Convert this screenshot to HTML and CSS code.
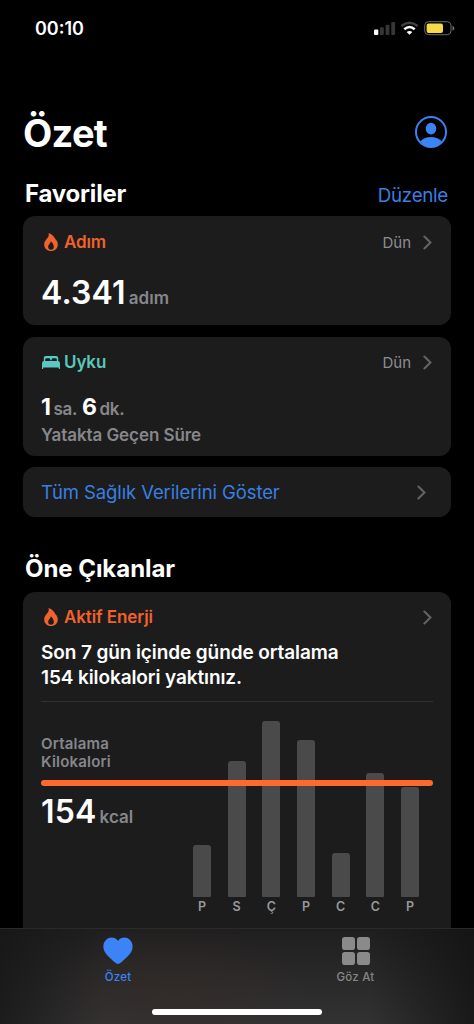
FILE: index.html
```html
<!DOCTYPE html>
<html lang="tr">
<head>
<meta charset="utf-8">
<title>Özet</title>
<link rel="stylesheet" href="styles.css">
</head>
<body>
<svg class="defs" width="0" height="0" aria-hidden="true">
  <symbol id="flame" viewBox="0 0 14 18"><path fill-rule="evenodd" d="M4.6 0C8 1.2 10.2 3.6 11.3 6C13 7.8 13.8 9.4 13.8 11.4C13.8 15.3 10.9 18 7 18C3.1 18 .2 15.2 .2 11.4C.2 9 1.2 7.6 2.6 6C4.4 4 5.2 2.4 4.6 0ZM6.7 8.2C6.9 10.4 4.2 11.2 4.2 14C4.2 15.7 5.3 16.8 7 16.8C8.7 16.8 9.8 15.7 9.8 14C9.8 11.6 8.4 9.4 6.7 8.2Z"/></symbol>
  <symbol id="chevron" viewBox="0 0 9 15"><path d="M1.4 1.5L7.4 7.5L1.4 13.5" fill="none" stroke="#626265" stroke-width="2.1" stroke-linecap="round" stroke-linejoin="miter"/></symbol>
</svg>
<div class="phone">
  <header class="status">
    <span class="clock">00:10</span>
    <svg class="status-icons" width="82" height="16" viewBox="0 0 82 16">
      <rect x="1" y="9.5" width="4.3" height="5.5" rx="1" fill="#fff"/>
      <rect x="7" y="7.2" width="3.8" height="7.8" rx="1" fill="#363636"/>
      <rect x="12.6" y="4.7" width="3.8" height="10.3" rx="1" fill="#363636"/>
      <rect x="18.3" y="2" width="3.8" height="13" rx="1" fill="#363636"/>
      <path d="M28.3 6Q36.5 -.6 44.7 6" fill="none" stroke="#414141" stroke-width="2.4"/>
      <path d="M31.3 9.2Q36.5 4.8 41.7 9.2" fill="none" stroke="#fff" stroke-width="2.6"/>
      <path d="M33.6 12Q36.5 9.8 39.4 12L36.5 14.8Z" fill="#fff"/>
      <rect x="51.7" y="1.7" width="26.3" height="13" rx="3.8" fill="none" stroke="#6b6b68" stroke-width="1"/>
      <rect x="53.6" y="3.4" width="16.4" height="9.6" rx="2" fill="#f4d94b"/>
      <path d="M79.5 5.8Q81.3 6.6 81.3 8.2T79.5 10.8Z" fill="#777"/>
    </svg>
  </header>
  <main class="content">
    <div class="title-row">
      <h1>Özet</h1>
      <svg width="32" height="32" viewBox="0 0 32 32" fill="#3b83f7">
        <circle cx="16" cy="16" r="15" fill="none" stroke="#3b83f7" stroke-width="2"/>
        <ellipse cx="16" cy="12.6" rx="5.3" ry="5.8"/>
        <path d="M5.2 25.3C8 22.4 12 21 16 21S24 22.4 26.8 25.3C24 29 20.2 31 16 31S8 29 5.2 25.3Z"/>
      </svg>
    </div>
    <div class="section-row"><h2>Favoriler</h2><a class="edit">Düzenle</a></div>

    <section class="card steps">
      <div class="card-head orange"><svg class="flame"><use href="#flame"/></svg><span class="name">Adım</span><span class="when">Dün</span><svg class="chev"><use href="#chevron"/></svg></div>
      <p class="big"><b>4.341</b><span>adım</span></p>
    </section>

    <section class="card sleep">
      <div class="card-head teal"><svg class="bed" viewBox="0 0 18 13"><path d="M1.8 5V1.9Q1.8 0 3.7 0H14.3Q16.2 0 16.2 1.9V5H14.8V3.6Q14.8 2.3 13.5 2.3H11Q9.7 2.3 9.7 3.6V4.2H8.3V3.6Q8.3 2.3 7 2.3H4.5Q3.2 2.3 3.2 3.6V5ZM0 7.4Q0 5.1 2 5.1H16Q18 5.1 18 7.4V12.4Q18 13 17.4 13Q16.8 13 16.8 12.4V11.4H1.2V12.4Q1.2 13 .6 13Q0 13 0 12.4Z"/></svg><span class="name">Uyku</span><span class="when">Dün</span><svg class="chev"><use href="#chevron"/></svg></div>
      <p class="duration"><b>1</b><span class="hour">sa.</span><b>6</b><span>dk.</span></p>
      <p class="caption">Yatakta Geçen Süre</p>
    </section>

    <section class="card all"><a>Tüm Sağlık Verilerini Göster</a><svg class="chev"><use href="#chevron"/></svg></section>

    <h2 class="highlights">Öne Çıkanlar</h2>

    <section class="card energy">
      <div class="card-head orange"><svg class="flame"><use href="#flame"/></svg><span class="name">Aktif Enerji</span><svg class="chev"><use href="#chevron"/></svg></div>
      <p class="summary">Son 7 gün içinde günde ortalama<br>154 kilokalori yaktınız.</p>
      <div class="chart">
        <div class="average">
          <p class="avg-label">Ortalama<br>Kilokalori</p>
          <p class="big kcal"><b>154</b><span>kcal</span></p>
        </div>
        <div class="bars">
          <div class="day"><i style="height:52px"></i><span>P</span></div>
          <div class="day"><i style="height:136px"></i><span>S</span></div>
          <div class="day"><i style="height:176px"></i><span>Ç</span></div>
          <div class="day"><i style="height:157px"></i><span>P</span></div>
          <div class="day"><i style="height:44px"></i><span>C</span></div>
          <div class="day"><i style="height:124px"></i><span>C</span></div>
          <div class="day"><i style="height:110px"></i><span>P</span></div>
        </div>
        <div class="avg-line"></div>
      </div>
    </section>
  </main>
  <nav class="tabs">
    <div class="tab active"><svg width="30" height="27" viewBox="0 0 30 27"><path d="M15 3.4C18-.6 23.5-.9 26.8 2.2C30.7 5.9 30.4 12 26.8 16.4C24 19.8 20.5 22.8 16.9 25.8Q15 27.4 13.1 25.8C9.5 22.8 6 19.8 3.2 16.4C-.4 12-.7 5.9 3.2 2.2C6.5-.9 12-.6 15 3.4Z" fill="#3b83f7"/></svg><span>Özet</span></div>
    <div class="tab"><svg width="28" height="28" viewBox="0 0 28 28" fill="#8a8a8a"><rect width="13" height="13" rx="2.8"/><rect x="15" width="13" height="13" rx="2.8"/><rect y="15" width="13" height="13" rx="2.8"/><rect x="15" y="15" width="13" height="13" rx="2.8"/></svg><span>Göz At</span></div>
    <div class="home"></div>
  </nav>
</div>
</body>
</html>
```
FILE: styles.css
```css
* { box-sizing: border-box; margin: 0; padding: 0; }
body { background: #000; color: #fff; font-family: Inter, "Liberation Sans", sans-serif; }
.defs { display: block; width: 0; height: 0; }
.phone { width: 474px; height: 1024px; display: flex; flex-direction: column; overflow: hidden; background: #000; }
.status { height: 56px; padding: 0 19px 0 35px; display: flex; align-items: center; justify-content: space-between; flex: none; }
.clock { font-size: 18px; font-weight: 600; letter-spacing: 0; line-height: 22px; padding-top: 1px; }
.content { height: 872px; flex: none; overflow: hidden; padding: 0 23px; display: flex; flex-direction: column; }
.title-row { display: flex; justify-content: space-between; align-items: center; height: 44px; margin-top: 54px; padding-right: 4px; flex: none; }
h1 { font-size: 38px; line-height: 44px; font-weight: 700; letter-spacing: -0.7px; padding-top: 1px; }
.section-row { display: flex; justify-content: space-between; align-items: baseline; height: 62px; padding: 24px 3px 0 2px; flex: none; }
h2 { font-size: 24px; line-height: 32px; font-weight: 700; letter-spacing: -0.2px; }
.edit { font-size: 18.8px; line-height: 32px; color: #3b7fe0; letter-spacing: -0.3px; }
.card { background: #1c1c1d; border-radius: 12px; padding: 0 18px; flex: none; }
.card-head { display: flex; align-items: center; height: 22px; padding-right: 1px; }
.orange { color: #f1622d; fill: #f1622d; }
.teal { color: #5ac8b9; fill: #5ac8c4; }
.flame { width: 14px; height: 18px; margin: 0 6px 0 3px; }
.bed { width: 18px; height: 13px; margin: 0 4px 0 1px; }
.name { font-size: 17px; font-weight: 600; line-height: 22px; letter-spacing: -0.1px; }
.when { margin-left: auto; margin-right: 12px; font-size: 15px; color: #8d8d91; }
.chev { width: 9px; height: 15px; margin-left: auto; }
.when + .chev { margin-left: 0; }
.steps { height: 109px; padding-top: 15px; }
.big { display: flex; align-items: baseline; line-height: 40px; }
.big b { font-size: 32px; font-weight: 600; letter-spacing: 0.2px; }
.big span { font-size: 17px; font-weight: 600; color: #87878b; margin-left: 3px; letter-spacing: 0; }
.steps .big { margin-top: 20px; }
.sleep { height: 119px; margin-top: 12px; padding-top: 14px; }
.duration { display: flex; align-items: baseline; line-height: 28px; margin-top: 20px; }
.duration b { font-size: 23px; font-weight: 700; }
.duration span, .caption { font-size: 17px; font-weight: 600; color: #87878b; }
.duration span { margin-left: 2.5px; letter-spacing: -0.3px; }
.duration .hour { margin-right: 5px; }
.caption { line-height: 24px; letter-spacing: -0.07px; }
.all { height: 50px; margin-top: 11px; display: flex; align-items: center; padding-right: 25px; color: #3b7fe0; font-size: 18.5px; letter-spacing: -0.1px; }
.highlights { margin: 36px 0 7px 2px; flex: none; letter-spacing: -0.05px; }
.energy { height: 360px; padding-top: 14px; border-radius: 12px 12px 0 0; }
.summary { font-size: 19px; line-height: 25px; font-weight: 600; margin-top: 12px; letter-spacing: -0.1px; }
.chart { margin-top: 11px; border-top: 1px solid #303032; height: 230px; display: flex; position: relative; }
.average { width: 144px; padding-top: 33px; }
.avg-label { font-size: 15px; line-height: 18px; font-weight: 600; color: #87878b; letter-spacing: 0.2px; }
.kcal { margin-top: 21px; }
.bars { height: 215px; padding-top: 19px; margin-left: 8px; width: 226px; display: flex; justify-content: space-between; align-items: flex-end; }
.day { width: 18px; height: 196px; display: flex; flex-direction: column; align-items: center; justify-content: flex-end; }
.day i { display: block; width: 18px; background: #4a4a4a; border-radius: 3px 3px 1px 1px; flex: none; }
.day span { font-size: 12.5px; line-height: 20px; font-weight: 600; color: #98989b; }
.avg-line { position: absolute; left: 0; top: 78px; width: 392px; height: 6px; border-radius: 3px; background: #ff692f; }
.tabs { height: 96px; flex: none; position: relative; display: flex; border-top: 1px solid #2b2a2a; background: radial-gradient(ellipse 130px 70px at 37% 70%, #382b2470, transparent), linear-gradient(90deg, #151515c0, transparent 22%, transparent 78%, #111111c0), linear-gradient(#201f1f, #333233); }
.tab { width: 237px; height: 60px; padding-top: 8px; display: flex; flex-direction: column; align-items: center; color: #868686; }
.tab.active { padding-right: 1px; }
.tab svg { height: 28px; }
.tab span { font-size: 11.5px; line-height: 16px; margin-top: 4px; font-weight: 500; letter-spacing: 0.2px; }
.tab.active span { color: #3b83f7; }
.home { position: absolute; left: 152px; top: 80px; width: 170px; height: 6px; border-radius: 3px; background: #fff; }
```
